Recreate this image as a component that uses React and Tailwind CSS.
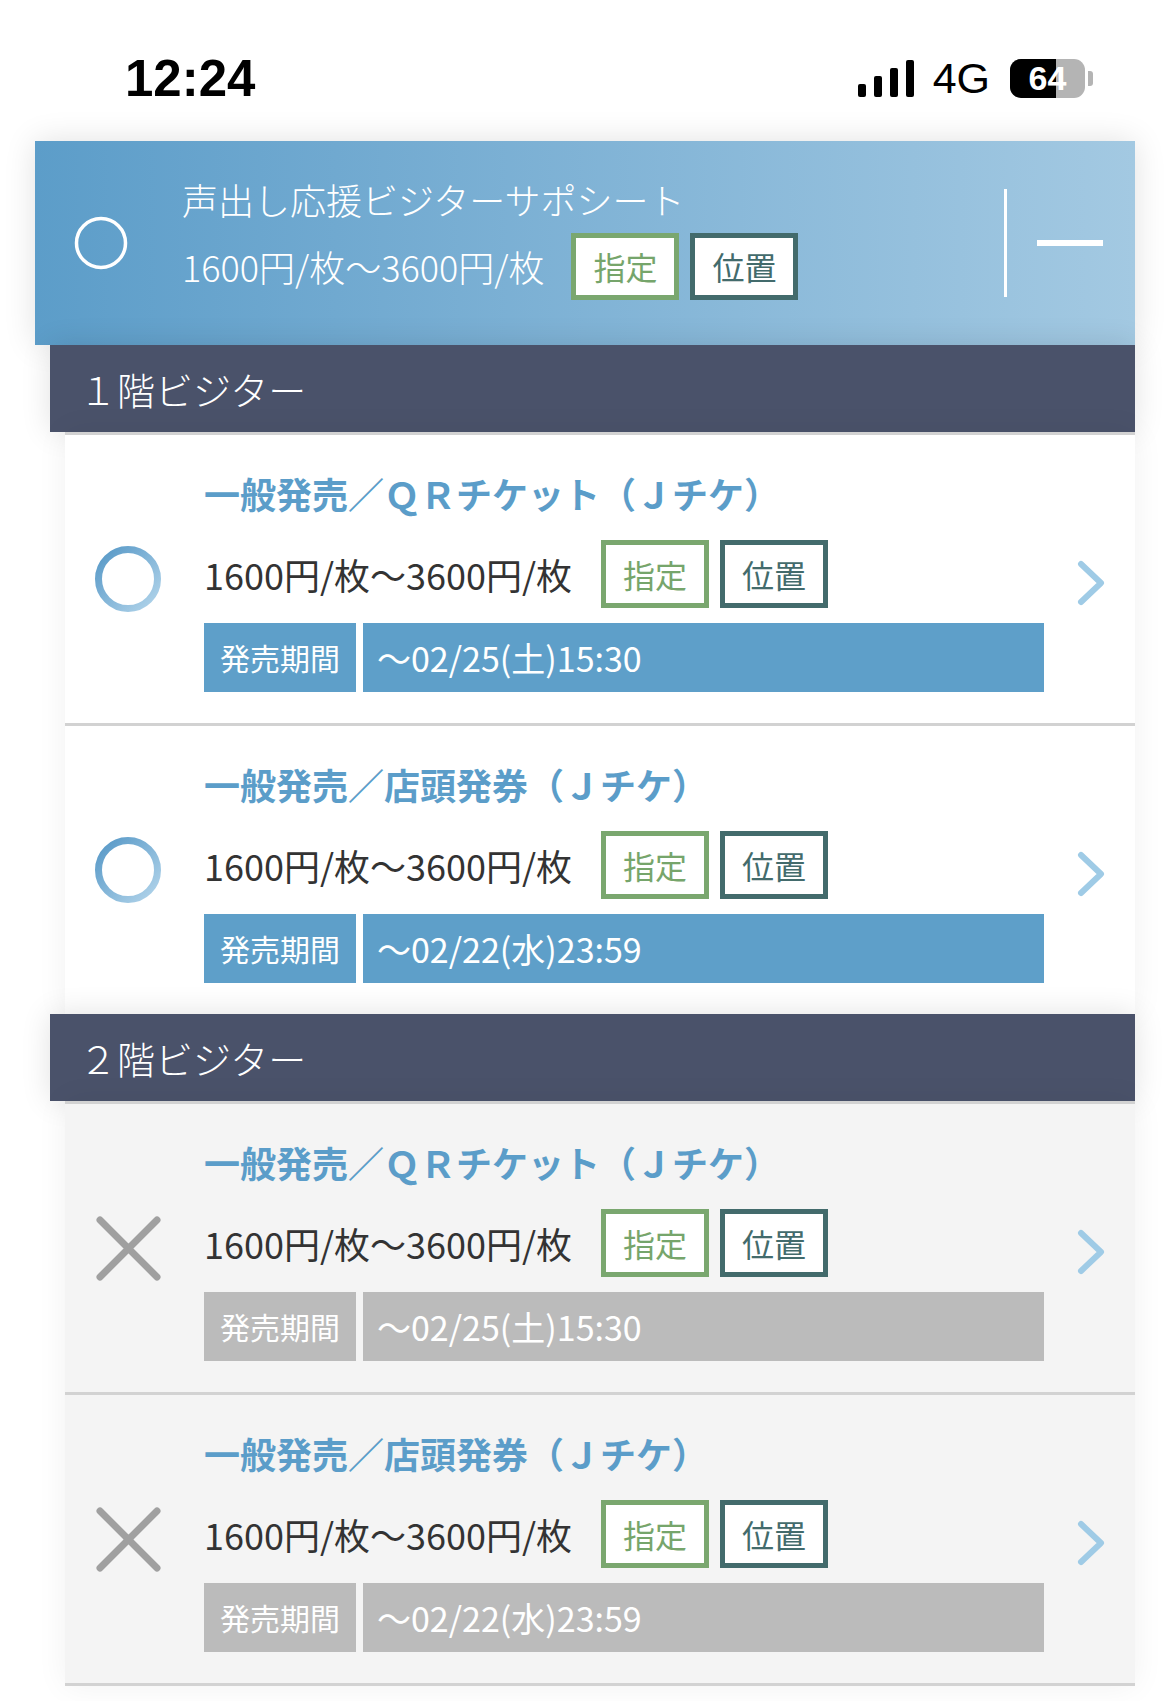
import React from "react";

const jp = "font-['Noto_Sans_CJK_JP',sans-serif]";

const sections = [
  {
    name: "１階ビジター",
    disabled: false,
    items: [
      { title: "一般発売／ＱＲチケット（Ｊチケ）", period: "〜02/25(土)15:30" },
      { title: "一般発売／店頭発券（Ｊチケ）", period: "〜02/22(水)23:59" },
    ],
  },
  {
    name: "２階ビジター",
    disabled: true,
    items: [
      { title: "一般発売／ＱＲチケット（Ｊチケ）", period: "〜02/25(土)15:30" },
      { title: "一般発売／店頭発券（Ｊチケ）", period: "〜02/22(水)23:59" },
    ],
  },
];

function StatusBar() {
  return (
    <div className="flex h-[141px] items-center bg-white pt-[15px]">
      <div className="pl-[125px] font-['Liberation_Sans',sans-serif] text-[51px] font-bold leading-none text-black">
        12:24
      </div>
      <div className="ml-auto flex items-center pr-[77px]">
        {/* signal */}
        <div className="flex h-[37px] items-end gap-[8px]">
          <div className="h-[13px] w-[8px] rounded-[2px] bg-black" />
          <div className="h-[21px] w-[8px] rounded-[2px] bg-black" />
          <div className="h-[29px] w-[8px] rounded-[2px] bg-black" />
          <div className="h-[37px] w-[8px] rounded-[2px] bg-black" />
        </div>
        <div className="ml-[19px] font-['Liberation_Sans',sans-serif] text-[43px] leading-none text-black">
          4G
        </div>
        {/* battery */}
        <div className="ml-[20px] flex items-center">
          <div className="relative h-[39px] w-[75px] overflow-hidden rounded-[11px] bg-[#b4b4b4]">
            <div className="h-full w-[46px] bg-black" />
            <div className="absolute inset-0 flex items-center justify-center font-['Liberation_Sans',sans-serif] text-[34px] font-bold leading-none text-white">
              64
            </div>
          </div>
          <div className="ml-[3px] h-[15px] w-[5px] rounded-r-[3px] bg-[#b4b4b4]" />
        </div>
      </div>
    </div>
  );
}

function Badge({ label, tone, className = "" }) {
  const colors =
    tone === "green"
      ? "border-[#7aa76f] text-[#76a56b]"
      : "border-[#436b6c] text-[#436b6c]";
  return (
    <div
      className={`flex h-[68px] w-[108px] items-center justify-center border-[5px] bg-white text-[32px] leading-none ${colors} ${className}`}
    >
      {label}
    </div>
  );
}

function RingIcon() {
  return (
    <svg width="70" height="70" viewBox="0 0 70 70">
      <defs>
        <linearGradient id="ring" x1="0" y1="0" x2="1" y2="1">
          <stop offset="0%" stopColor="#5597c6" />
          <stop offset="100%" stopColor="#b3d5eb" />
        </linearGradient>
      </defs>
      <circle cx="35" cy="35" r="29.5" fill="none" stroke="url(#ring)" strokeWidth="7" />
    </svg>
  );
}

function CrossIcon() {
  return (
    <svg width="70" height="70" viewBox="0 0 70 70">
      <path d="M7 7 L64 64 M64 7 L7 64" stroke="#a0a0a0" strokeWidth="7" strokeLinecap="round" />
    </svg>
  );
}

function Chevron() {
  return (
    <svg width="28" height="46" viewBox="0 0 28 46">
      <path
        d="M4 4 L24 23 L4 42"
        fill="none"
        stroke="#9fcbe6"
        strokeWidth="6"
        strokeLinecap="round"
        strokeLinejoin="round"
      />
    </svg>
  );
}

function TicketRow({ title, period, disabled, border }) {
  return (
    <div
      className={`flex ${disabled ? "bg-[#f4f4f4]" : "bg-white"} ${
        border ? "border-b-[3px] border-[#d2d2d2]" : ""
      }`}
    >
      <div className="flex w-[139px] shrink-0 items-center pl-[28px]">
        {disabled ? <CrossIcon /> : <RingIcon />}
      </div>
      <div className="w-[840px] shrink-0 pb-[31px] pt-[36px]">
        <div className="h-[44px] text-[36px] font-bold leading-[44px] text-[#5b9dc9]">
          {title}
        </div>
        <div className="mt-[25px] flex h-[68px] items-center">
          <span className="text-[36px] leading-none text-[#333]">1600円/枚〜3600円/枚</span>
          <Badge label="指定" tone="green" className="ml-[29px]" />
          <Badge label="位置" tone="teal" className="ml-[11px]" />
        </div>
        <div className="mt-[15px] flex h-[69px] gap-[7px]">
          <div
            className={`flex w-[152px] items-center justify-center text-[30px] text-white ${
              disabled ? "bg-[#bbbbbb]" : "bg-[#5e9fc9]"
            }`}
          >
            発売期間
          </div>
          <div
            className={`flex flex-1 items-center pl-[14px] text-[34px] text-white ${
              disabled ? "bg-[#bbbbbb]" : "bg-[#5e9fc9]"
            }`}
          >
            {period}
          </div>
        </div>
      </div>
      <div className="flex flex-1 items-center pl-[33px] pt-[8px]">
        <Chevron />
      </div>
    </div>
  );
}

export default function App() {
  return (
    <div className={`min-h-[1701px] bg-white ${jp}`}>
      <StatusBar />

      {/* selected seat header */}
      <div className="mx-[35px] flex h-[204px] items-center bg-gradient-to-r from-[#5c9dc9] to-[#a3c9e2] shadow-[0_0_30px_rgba(0,0,0,0.12)]">
        <svg width="60" height="60" viewBox="0 0 60 60" className="ml-[36px] shrink-0">
          <circle cx="30" cy="30" r="24.5" fill="none" stroke="white" strokeWidth="3.5" />
        </svg>
        <div className="ml-[51px] pb-[10px]">
          <div className="h-[44px] text-[36px] font-light leading-[44px] text-white">
            声出し応援ビジターサポシート
          </div>
          <div className="mt-[12px] flex h-[67px] items-center">
            <span className="text-[36px] font-light leading-none text-white">1600円/枚〜3600円/枚</span>
            <Badge label="指定" tone="green" className="ml-[27px] !h-[67px]" />
            <Badge label="位置" tone="teal" className="ml-[11px] !h-[67px]" />
          </div>
        </div>
        <div className="ml-auto flex items-center pr-[32px]">
          <div className="h-[108px] w-[3px] bg-white" />
          <div className="ml-[30px] h-[6px] w-[66px] bg-white" />
        </div>
      </div>

      {sections.map((section) => (
        <div key={section.name} className="mx-[35px]">
          <div className="ml-[15px] flex h-[87px] items-center bg-[#4a526a] pl-[29px] text-[38px] font-light text-white shadow-[0_0_30px_rgba(0,0,0,0.12)]">
            {section.name}
          </div>
          <div className="ml-[30px] border-t-[3px] border-[#d2d2d2] shadow-[0_0_30px_rgba(0,0,0,0.06)]">
            {section.items.map((item, i) => (
              <TicketRow
                key={i}
                title={item.title}
                period={item.period}
                disabled={section.disabled}
                border={section.disabled || i < section.items.length - 1}
              />
            ))}
          </div>
        </div>
      ))}
    </div>
  );
}
